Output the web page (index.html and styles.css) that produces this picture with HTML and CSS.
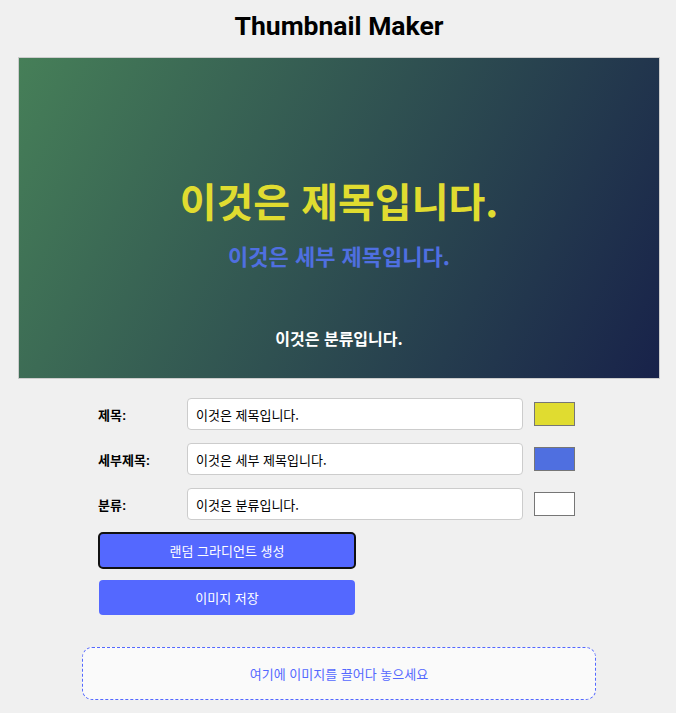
FILE: index.html
```html
<!DOCTYPE html>
<html lang="ko">
<head>
<meta charset="utf-8">
<title>Thumbnail Maker</title>
<link rel="stylesheet" href="styles.css">
</head>
<body>
<main class="page">
  <h1 class="heading">Thumbnail Maker</h1>
  <div class="preview">
    <div class="pv-title">이것은 제목입니다.</div>
    <div class="pv-subtitle">이것은 세부 제목입니다.</div>
    <div class="pv-category">이것은 분류입니다.</div>
  </div>
  <section class="controls">
    <div class="row">
      <label class="label">제목:</label>
      <input class="text-input" type="text" value="이것은 제목입니다.">
      <span class="swatch swatch-yellow"></span>
    </div>
    <div class="row">
      <label class="label">세부제목:</label>
      <input class="text-input" type="text" value="이것은 세부 제목입니다.">
      <span class="swatch swatch-blue"></span>
    </div>
    <div class="row">
      <label class="label">분류:</label>
      <input class="text-input" type="text" value="이것은 분류입니다.">
      <span class="swatch swatch-white"></span>
    </div>
    <button class="btn btn-focused" type="button">랜덤 그라디언트 생성</button>
    <button class="btn btn-save" type="button">이미지 저장</button>
  </section>
  <div class="dropzone">여기에 이미지를 끌어다 놓으세요</div>
</main>
</body>
</html>
```
FILE: styles.css
```css
html, body {
  margin: 0;
  padding: 0;
  background: #f0f0f0;
}
body {
  font-family: "Liberation Sans", "Noto Sans CJK KR", sans-serif;
  color: #000;
}
.page {
  padding: 0 16px 0 18px;
  display: flex;
  flex-direction: column;
  align-items: center;
}
.heading {
  font-family: Roboto, "Noto Sans CJK KR", sans-serif;
  font-size: 26.5px;
  font-weight: 700;
  line-height: 32px;
  margin: 10px 0 15px;
  text-align: center;
}
.preview {
  box-sizing: border-box;
  width: 642px;
  height: 322px;
  border: 1px solid #cccccc;
  background: linear-gradient(116.57deg, #467f58 0%, #18224a 100%);
  display: flex;
  flex-direction: column;
  align-items: center;
  padding-top: 122px;
  font-family: "Noto Sans CJK KR", sans-serif;
  font-weight: 700;
}
.pv-title {
  font-size: 40px;
  line-height: 40px;
  color: #e0dc30;
}
.pv-subtitle {
  font-size: 22px;
  line-height: 22px;
  color: #4f6fe0;
  margin-top: 24px;
}
.pv-category {
  font-size: 16px;
  line-height: 16px;
  color: #ffffff;
  margin-top: 64px;
}
.controls {
  box-sizing: border-box;
  width: 514px;
  padding: 0 16px;
  margin-top: 19px;
  display: flex;
  flex-direction: column;
  gap: 13px;
  align-items: flex-start;
}
.row {
  display: flex;
  align-items: center;
  height: 32px;
}
.label {
  width: 89px;
  font-family: "Liberation Sans", "Noto Sans CJK KR", sans-serif;
  font-size: 13px;
  font-weight: 700;
}
.text-input {
  box-sizing: border-box;
  width: 336px;
  height: 32px;
  border: 1px solid #cccccc;
  border-radius: 4px;
  background: #ffffff;
  padding: 0 8px;
  font-family: "Noto Sans CJK KR", sans-serif;
  font-size: 13px;
  color: #000;
  outline: none;
}
.swatch {
  box-sizing: border-box;
  width: 41px;
  height: 24px;
  margin-left: 11px;
  border: 1px solid #767676;
}
.swatch-yellow { background: #e0dc30; }
.swatch-blue { background: #4f6fe0; }
.swatch-white { background: #ffffff; }
.btn {
  box-sizing: border-box;
  width: 256px;
  height: 35px;
  margin-left: 1px;
  border: none;
  border-radius: 4px;
  background: #5468ff;
  color: #ffffff;
  font-family: "Noto Sans CJK KR", sans-serif;
  font-size: 13px;
  cursor: pointer;
}
.btn-save {
  margin-top: -1px;
}
.btn-focused {
  outline: 2px solid #111111;
  outline-offset: -1px;
}
.dropzone {
  box-sizing: border-box;
  width: 514px;
  height: 53px;
  margin-top: 32px;
  border: 1px dashed #5468ff;
  border-radius: 10px;
  background: #fafafa;
  color: #5468ff;
  font-family: "Noto Sans CJK KR", sans-serif;
  font-size: 13px;
  display: flex;
  align-items: center;
  justify-content: center;
}
```
